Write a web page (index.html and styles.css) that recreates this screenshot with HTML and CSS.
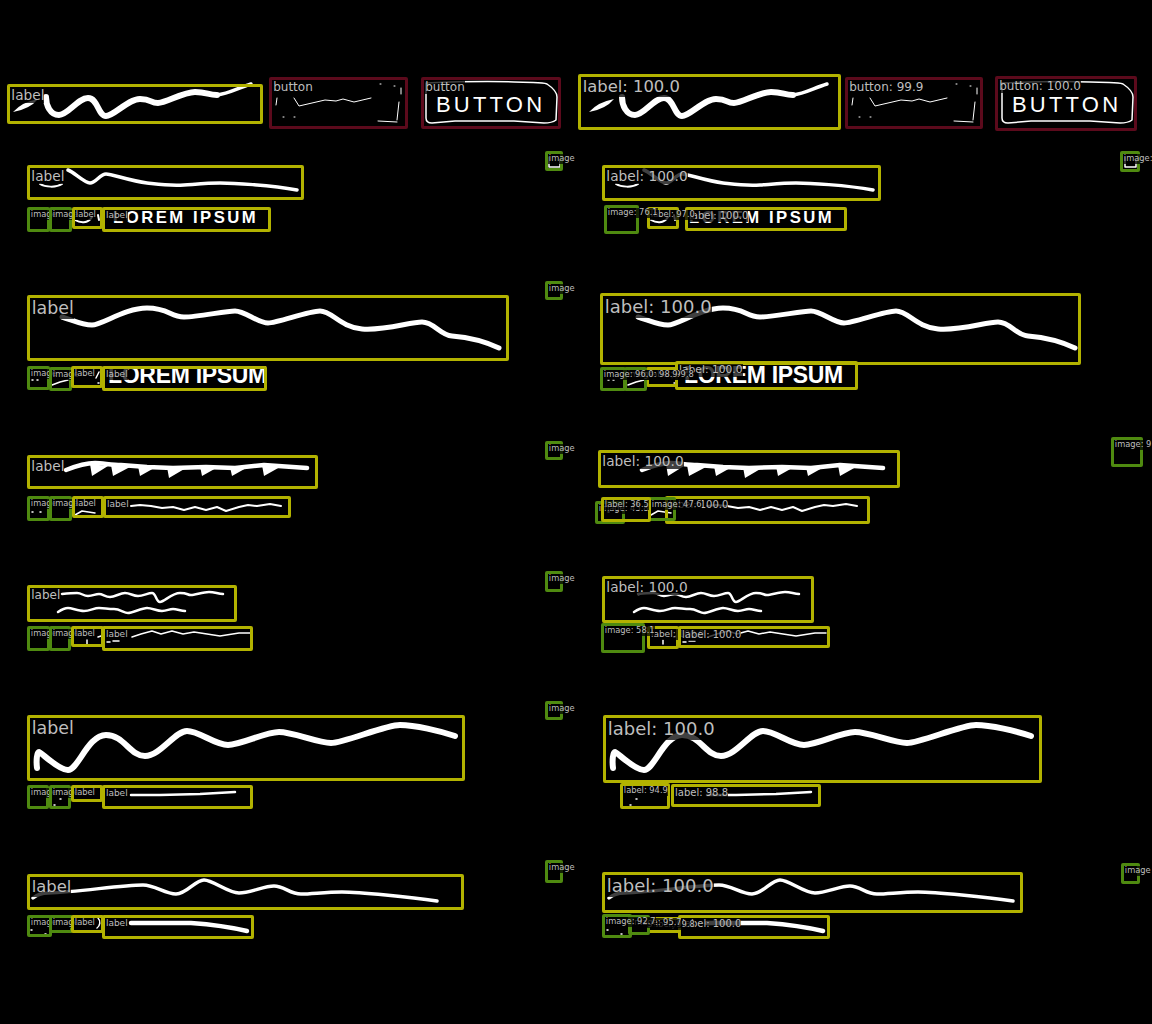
FILE: index.html
```html
<!DOCTYPE html>
<html lang="en">
<head>
  <meta charset="UTF-8" />
  <title>Detections</title>
  <link rel="stylesheet" href="styles.css">
</head>
<body>

<div class="canvas">

  <!-- ground truth -->
  <div class="panel">
    <svg class="sketch" width="576" height="1024" viewBox="0 0 576 1024">
      <g id="strokes">
        <!-- row 0 -->
        <path class="fill" d="M13 112 Q22 102 38 99 Q30 109 13 112 Z"/>
        <path class="w6" d="M46 97 C46 105 50 115 59 115 S78 98 88 98 S98 116 106 116 S128 99 140 99 S150 103 158 103 S183 92 195 92 S208 95 217 95"/>
        <path class="w3" d="M217 95 C228 94 238 88 251 84"/>
        <path class="w1" d="M294 98 L299 106 L312 103 L325 100 L336 101 L343 99 L354 102 L371 98 M277 98 L276 105 M283 117 h1 M294 117 h1 M380 84 h1 M394 86 h1 M401 88 V94 M399 102 L397 120 M378 121 L397 122"/>
        <path class="w1b" d="M426 83 C450 82 490 81 514 82 S542 82 547 84 C553 88 557 92 557 97 L556 120 C552 123 548 123 544 123 L514 121 L455 121 L432 123 C428 123 426 121 426 118 Z"/>
        <!-- row 1 -->
        <path class="w2" d="M40 184 C45 187 56 188 62 184 M75 220 C80 223 88 224 92 217 M98 215 L99 220"/>
        <path class="w3" d="M68 170 C74 172 84 183 90 183 S100 174 106 174 S130 181 147 183 S170 186 184 185 S208 183 220 183 S270 185 297 190"/>
        <path class="w1b" d="M549 157 V167 H560 V160"/>
        <!-- row 2 -->
        <path class="w5" d="M62 317 C72 320 82 325 92 325 S125 308 147 308 S170 317 184 317 S225 311 235 311 S258 323 268 323 S308 311 320 311 S340 327 362 329 S410 322 422 322 S440 335 452 336 S480 339 499 348"/>
        <path class="w1b" d="M52 385 L60 382 L68 380 M32 380 h1 M37 380 h1 M99 372 L96 378 M98 383 h1"/>
        <!-- row 3 -->
        <path class="w4" d="M66 470 C76 466 88 463 95 463 S112 465 121 465 L147 467 L173 468 L206 467 L235 468 L264 465 L307 468"/>
        <path class="fill" d="M92 476 L90 464 L108 466 Z M113 476 L111 465 L130 467 Z M140 476 L138 466 L156 467 Z M169 478 L167 467 L186 468 Z M202 476 L200 466 L218 467 Z M232 476 L230 467 L248 467 Z M264 476 L262 465 L280 467 Z"/>
        <path class="w2" d="M131 506 L140 505 L151 506 L162 508 L173 507 L184 510 L195 507 L206 510 L217 507 L226 511 L239 507 L248 505 L257 506 L270 504 L281 506"/>
        <path class="w1b" d="M75 515 L82 511 L95 513 M32 512 h1 M40 512 h1"/>
        <!-- row 4 -->
        <path class="w2b" d="M62 594 S72 593 77 593 S83 596 88 596 S95 594 99 594 S105 597 110 597 S120 593 125 593 S133 596 138 596 S148 593 152 593 S156 602 160 602 S172 593 180 593 S187 595 191 595 S203 592 209 592 S218 594 223 594"/>
        <path class="w2b" d="M58 612 S64 608 68 608 S78 611 84 611 S94 608 99 608 S108 609 114 609 S124 613 128 613 S142 608 147 608 S157 611 162 611 S169 609 173 609 S181 611 185 611"/>
        <path class="w1b" d="M132 637 L141 634 L152 631 L161 634 L172 631 L183 634 L194 632 L220 636 L239 633 L250 633 M107 642 h3 M113 641 h6 M87 640 V644 M98 637 L101 636"/>
        <!-- row 5 -->
        <path class="w6" d="M37 768 C36 760 37 752 39 752 S58 770 68 770 S88 735 106 735 S130 756 145 756 S175 731 187 731 S215 745 228 745 S265 732 279 732 S318 743 331 743 S385 725 400 725 S440 731 455 736"/>
        <path class="w2b" d="M131 795 L160 795 L200 794 L235 792"/>
        <path class="w1b" d="M54 805 h1 M60 799 h1"/>
        <!-- row 6 -->
        <path class="w3" d="M33 898 C38 894 44 893 48 893 C80 892 120 885 143 885 C155 885 165 894 176 894 S195 880 204 880 S228 893 239 893 S264 886 274 886 S290 894 301 894 S325 892 342 892 S410 897 437 901"/>
        <path class="w4" d="M131 923 L191 923 C205 924 230 927 247 931"/>
        <path class="w1b" d="M98 918 C101 921 100 926 97 928 M31 930 h1 M45 934 h1 M53 931 h1"/>
      </g>
    </svg>
    <span class="drawn drawn-button">BUTTON</span>
    <span class="drawn drawn-lorem-a">LOREM IPSUM</span>
    <span class="drawn drawn-lorem-b">LOREM IPSUM</span>

    <div class="box yellow" style="left:7px;top:84px;width:256px;height:40px"><span class="tag s13">label</span></div>
    <div class="box red" style="left:269px;top:77px;width:139px;height:52px"><span class="tag s12">button</span></div>
    <div class="box red" style="left:421px;top:77px;width:140px;height:52px"><span class="tag s12">button</span></div>

    <div class="box green" style="left:545px;top:151px;width:18px;height:20px"><span class="tag s8">image</span></div>
    <div class="box yellow" style="left:27px;top:165px;width:277px;height:35px"><span class="tag s13">label</span></div>
    <div class="box green" style="left:27px;top:207px;width:23px;height:25px"><span class="tag s8">image</span></div>
    <div class="box green" style="left:49px;top:207px;width:23px;height:25px"><span class="tag s8">image</span></div>
    <div class="box yellow" style="left:72px;top:207px;width:31px;height:22px"><span class="tag s8">label</span></div>
    <div class="box yellow" style="left:102px;top:207px;width:169px;height:25px"><span class="tag s9">label</span></div>

    <div class="box green" style="left:545px;top:281px;width:18px;height:19px"><span class="tag s8">image</span></div>
    <div class="box yellow" style="left:27px;top:295px;width:482px;height:66px"><span class="tag s17">label</span></div>
    <div class="box green" style="left:27px;top:366px;width:23px;height:24px"><span class="tag s8">image</span></div>
    <div class="box green" style="left:49px;top:367px;width:23px;height:24px"><span class="tag s8">image</span></div>
    <div class="box yellow" style="left:71px;top:366px;width:32px;height:22px"><span class="tag s8">label</span></div>
    <div class="box yellow" style="left:102px;top:366px;width:165px;height:25px"><span class="tag s9">label</span></div>

    <div class="box green" style="left:545px;top:441px;width:18px;height:19px"><span class="tag s8">image</span></div>
    <div class="box yellow" style="left:27px;top:455px;width:291px;height:34px"><span class="tag s14">label</span></div>
    <div class="box green" style="left:27px;top:496px;width:23px;height:25px"><span class="tag s8">image</span></div>
    <div class="box green" style="left:49px;top:496px;width:23px;height:25px"><span class="tag s8">image</span></div>
    <div class="box yellow" style="left:72px;top:496px;width:32px;height:22px"><span class="tag s8">label</span></div>
    <div class="box yellow" style="left:103px;top:496px;width:188px;height:22px"><span class="tag s9">label</span></div>

    <div class="box green" style="left:545px;top:571px;width:18px;height:21px"><span class="tag s8">image</span></div>
    <div class="box yellow" style="left:27px;top:585px;width:210px;height:37px"><span class="tag s12">label</span></div>
    <div class="box green" style="left:27px;top:626px;width:23px;height:25px"><span class="tag s8">image</span></div>
    <div class="box green" style="left:49px;top:626px;width:22px;height:25px"><span class="tag s8">image</span></div>
    <div class="box yellow" style="left:71px;top:626px;width:33px;height:21px"><span class="tag s8">label</span></div>
    <div class="box yellow" style="left:102px;top:626px;width:151px;height:25px"><span class="tag s9">label</span></div>

    <div class="box green" style="left:545px;top:701px;width:18px;height:19px"><span class="tag s8">image</span></div>
    <div class="box yellow" style="left:27px;top:715px;width:438px;height:66px"><span class="tag s17">label</span></div>
    <div class="box green" style="left:27px;top:785px;width:22px;height:24px"><span class="tag s8">image</span></div>
    <div class="box green" style="left:49px;top:785px;width:22px;height:24px"><span class="tag s8">image</span></div>
    <div class="box yellow" style="left:71px;top:785px;width:32px;height:17px"><span class="tag s8">label</span></div>
    <div class="box yellow" style="left:102px;top:785px;width:151px;height:24px"><span class="tag s9">label</span></div>

    <div class="box green" style="left:545px;top:860px;width:18px;height:23px"><span class="tag s8">image</span></div>
    <div class="box yellow" style="left:27px;top:874px;width:437px;height:36px"><span class="tag s16">label</span></div>
    <div class="box green" style="left:27px;top:915px;width:25px;height:22px"><span class="tag s8">image</span></div>
    <div class="box green" style="left:49px;top:915px;width:24px;height:18px"><span class="tag s8">image</span></div>
    <div class="box yellow" style="left:71px;top:915px;width:33px;height:18px"><span class="tag s8">label</span></div>
    <div class="box yellow" style="left:102px;top:915px;width:152px;height:24px"><span class="tag s9">label</span></div>
  </div>

  <!-- predictions -->
  <div class="panel">
    <svg class="sketch" width="576" height="1024" viewBox="0 0 576 1024"><use href="#strokes"/></svg>
    <span class="drawn drawn-button">BUTTON</span>
    <span class="drawn drawn-lorem-a">LOREM IPSUM</span>
    <span class="drawn drawn-lorem-b">LOREM IPSUM</span>

    <div class="box yellow" style="left:2px;top:74px;width:263px;height:56px"><span class="tag s16">label: 100.0</span></div>
    <div class="box red" style="left:269px;top:77px;width:138px;height:52px"><span class="tag s12">button: 99.9</span></div>
    <div class="box red" style="left:419px;top:76px;width:142px;height:55px"><span class="tag s12">button: 100.0</span></div>

    <div class="box green" style="left:544px;top:151px;width:20px;height:21px"><span class="tag s8">image:</span></div>
    <div class="box yellow" style="left:26px;top:165px;width:279px;height:36px"><span class="tag s14">label: 100.0</span></div>
    <div class="box yellow" style="left:109px;top:207px;width:162px;height:24px"><span class="tag s10">label: 100.0</span></div>
    <div class="box yellow" style="left:71px;top:207px;width:32px;height:22px"><span class="tag s8">label: 97.0</span></div>
    <div class="box green" style="left:28px;top:205px;width:35px;height:29px"><span class="tag s8">image: 76.1</span></div>

    <div class="box green" style="left:535px;top:437px;width:32px;height:30px"><span class="tag s8">image: 9</span></div>
    <div class="box yellow" style="left:24px;top:293px;width:481px;height:72px"><span class="tag s18">label: 100.0</span></div>
    <div class="box yellow" style="left:99px;top:361px;width:183px;height:29px"><span class="tag s11">label: 100.0</span></div>
    <div class="box yellow" style="left:70px;top:367px;width:32px;height:20px"><span class="tag s8">label: 99.8</span></div>
    <div class="box green" style="left:48px;top:367px;width:23px;height:24px"><span class="tag s8">image: 98.9</span></div>
    <div class="box green" style="left:24px;top:367px;width:26px;height:24px"><span class="tag s8">image: 96.0</span></div>

    <div class="box yellow" style="left:22px;top:450px;width:302px;height:38px"><span class="tag s14">label: 100.0</span></div>
    <div class="box yellow" style="left:89px;top:496px;width:205px;height:28px"><span class="tag s10">label: 100.0</span></div>
    <div class="box green" style="left:72px;top:497px;width:28px;height:24px"><span class="tag s8">image: 47.6</span></div>
    <div class="box green" style="left:19px;top:501px;width:30px;height:23px"><span class="tag s8">image: 45.8</span></div>
    <div class="box yellow" style="left:25px;top:497px;width:50px;height:25px"><span class="tag s8">label: 36.5</span></div>

    <div class="box yellow" style="left:26px;top:576px;width:212px;height:47px"><span class="tag s14">label: 100.0</span></div>
    <div class="box yellow" style="left:71px;top:626px;width:32px;height:23px"><span class="tag s9">label: 100.0</span></div>
    <div class="box yellow" style="left:102px;top:626px;width:152px;height:22px"><span class="tag s10">label: 100.0</span></div>
    <div class="box green" style="left:25px;top:623px;width:44px;height:30px"><span class="tag s8">image: 58.1</span></div>

    <div class="box yellow" style="left:27px;top:715px;width:439px;height:68px"><span class="tag s18">label: 100.0</span></div>
    <div class="box yellow" style="left:95px;top:784px;width:150px;height:23px"><span class="tag s10">label: 98.8</span></div>
    <div class="box yellow" style="left:44px;top:783px;width:50px;height:26px"><span class="tag s8">label: 94.9</span></div>

    <div class="box green" style="left:545px;top:863px;width:19px;height:21px"><span class="tag s8">image</span></div>
    <div class="box yellow" style="left:26px;top:872px;width:421px;height:41px"><span class="tag s18">label: 100.0</span></div>
    <div class="box yellow" style="left:102px;top:915px;width:152px;height:24px"><span class="tag s10">label: 100.0</span></div>
    <div class="box yellow" style="left:71px;top:917px;width:34px;height:16px"><span class="tag s8">label: 99.8</span></div>
    <div class="box green" style="left:52px;top:915px;width:22px;height:20px"><span class="tag s8">image: 95.7</span></div>
    <div class="box green" style="left:26px;top:914px;width:30px;height:24px"><span class="tag s8">image: 92.7</span></div>
  </div>

</div>

</body>
</html>
```

FILE: styles.css
```css
html, body {
  margin: 0;
  padding: 0;
  background-color: #000;
}
body {
  font-family: "DejaVu Sans", sans-serif;
}
.canvas {
  display: flex;
  width: 1152px;
  height: 1024px;
  overflow: hidden;
}
.panel {
  position: relative;
  width: 576px;
  height: 1024px;
  flex: none;
}
.sketch {
  position: absolute;
  left: 0;
  top: 0;
}
.sketch path {
  fill: none;
  stroke: #fff;
  stroke-linecap: round;
  stroke-linejoin: round;
}
.sketch .fill {
  fill: #fff;
  stroke: none;
}
.w1 { stroke-width: 1; }
.w1b { stroke-width: 1.5; }
.w2 { stroke-width: 2; }
.w2b { stroke-width: 2.5; }
.w3 { stroke-width: 3.5; }
.w4 { stroke-width: 4.5; }
.w5 { stroke-width: 5; }
.w6 { stroke-width: 6; }

/* words drawn by hand in the source picture */
.drawn {
  position: absolute;
  color: #fff;
  font-family: "Liberation Sans", sans-serif;
  line-height: 1;
  white-space: nowrap;
}
.drawn-button {
  left: 436px;
  top: 94px;
  font-size: 22px;
  letter-spacing: 3.2px;
}
.drawn-lorem-a {
  left: 113px;
  top: 210px;
  font-size: 16.7px;
  font-weight: bold;
  letter-spacing: 2.5px;
}
.drawn-lorem-b {
  left: 108px;
  top: 364px;
  font-size: 23px;
  font-weight: bold;
  letter-spacing: -0.3px;
}

.box {
  position: absolute;
  box-sizing: border-box;
  border: 3px solid;
  border-radius: 2px;
  white-space: nowrap;
}
.yellow { border-color: #b2b200; }
.red { border-color: #5c0a1c; }
.green { border-color: #4f8a10; }

.tag {
  display: inline-block;
  vertical-align: top;
  padding-left: 0.1em;
  color: #bebebe;
  background-color: rgba(0, 0, 0, 0.75);
  line-height: 1.2;
}
.s8 { font-size: 8.3px; }
.s9 { font-size: 9px; }
.s10 { font-size: 10px; }
.s11 { font-size: 10.7px; }
.s12 { font-size: 12px; }
.s13 { font-size: 13.7px; }
.s14 { font-size: 13.7px; }
.s16 { font-size: 16.4px; }
.s17 { font-size: 17.4px; }
.s18 { font-size: 18px; }
```
